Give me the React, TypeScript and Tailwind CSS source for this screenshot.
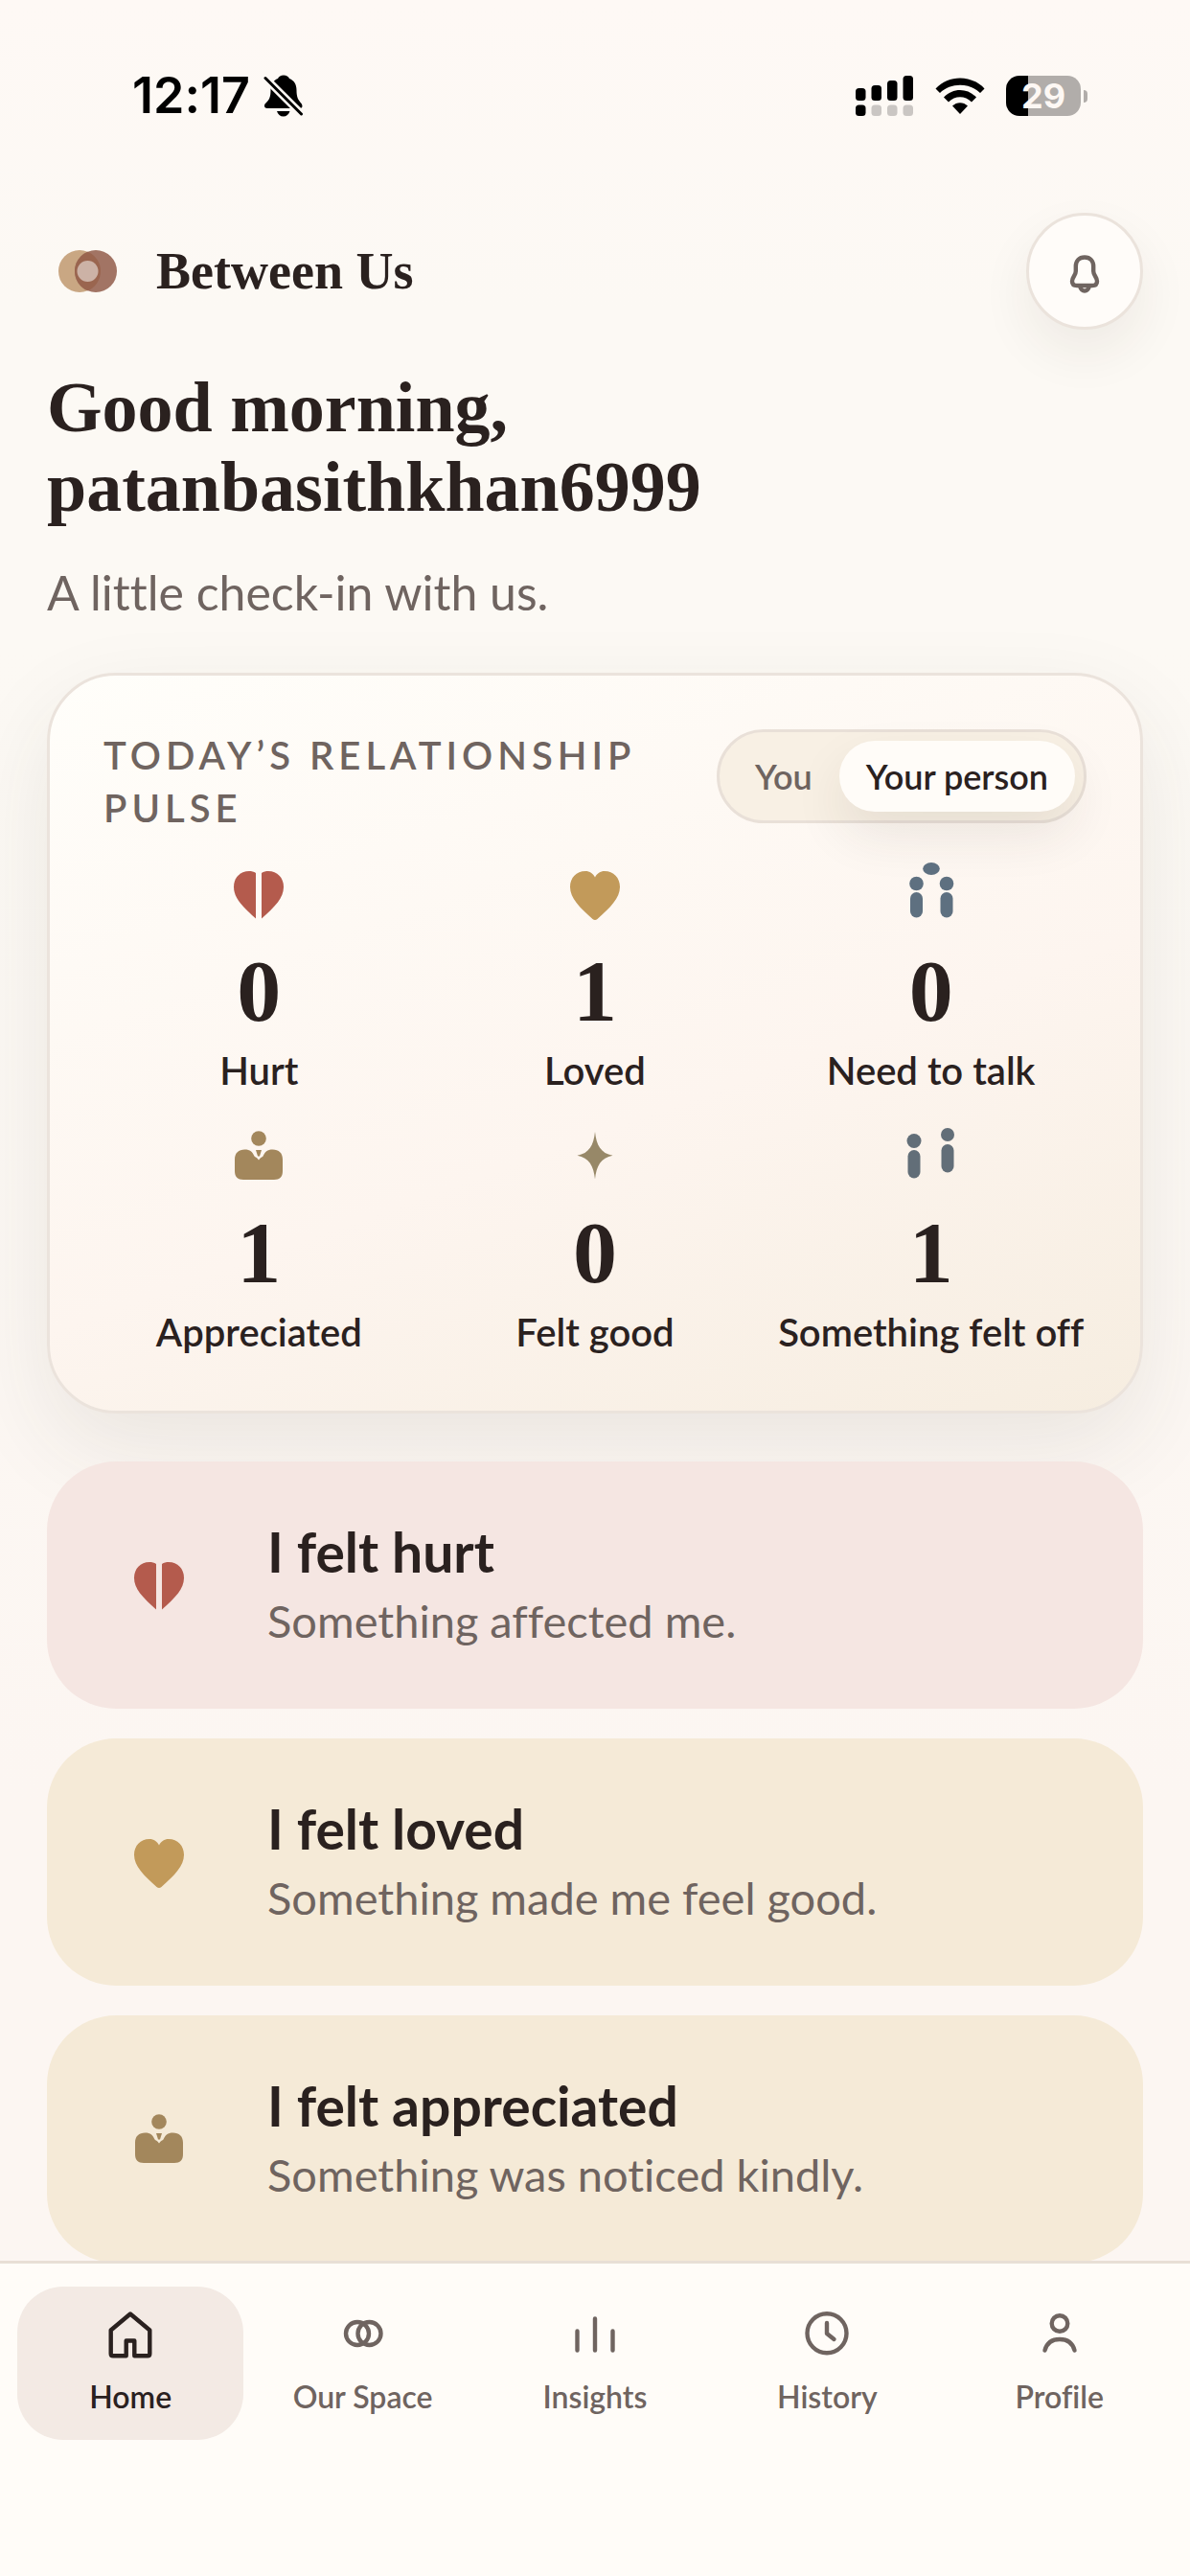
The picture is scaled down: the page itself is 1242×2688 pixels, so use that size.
import React, { useState } from "react";
import clsx from "clsx";

const sans =
  "font-['Lato','Noto_Sans',sans-serif] [font-variant-ligatures:none]";
const serif = "font-['Liberation_Serif',serif]";

type IconProps = { className?: string };

const HurtIcon = ({ className }: IconProps) => (
  <svg viewBox="0 0 72 72" className={className} fill="#b45b4d">
    <path d="M33 14C31 12.600 28.500 12 26 12C16.500 12 10 19 10 28.500C10 40 19 49 33 61.500Z" />
    <path d="M39 14C41 12.600 43.500 12 46 12C55.500 12 62 19 62 28.500C62 40 53 49 39 61.500Z" />
  </svg>
);

const LovedIcon = ({ className }: IconProps) => (
  <svg viewBox="0 0 72 72" className={className} fill="#c29a5a">
    <path d="M36 18.500C38 14.500 41.500 12 46 12C55.500 12 62 19 62 28.500C62 40 52 50 38.500 62Q36 64 33.500 62C20 50 10 40 10 28.500C10 19 16.500 12 26 12C30.500 12 34 14.500 36 18.500Z" />
  </svg>
);

const TalkIcon = ({ className }: IconProps) => (
  <svg viewBox="0 0 72 72" className={className} fill="#5e7080">
    <ellipse cx="36" cy="9.500" rx="8.800" ry="6.400" />
    <circle cx="20.500" cy="25" r="7.300" />
    <circle cx="52" cy="25" r="7.300" />
    <rect x="14" y="34" width="13" height="26.500" rx="6.500" />
    <rect x="45.500" y="34" width="13" height="26.500" rx="6.500" />
  </svg>
);

const AppreciatedIcon = ({ className }: IconProps) => (
  <svg viewBox="0 0 72 72" className={className} fill="#a3875c">
    <circle cx="36" cy="18" r="7.800" />
    <path d="M11 40C11 33 15 29.500 21.500 29.500C27 29.500 29.500 32 31.500 36.500C32.500 37.500 34 37.500 36 40.500C38 37.500 39.500 37.500 40.500 36.500C42.500 32 45 29.500 50.500 29.500C57 29.500 61 33 61 40V52C61 58 58 61 52 61H20C14 61 11 58 11 52Z" />
    <path d="M33 30H39L37 36.500H35Z" />
  </svg>
);

const GoodIcon = ({ className }: IconProps) => (
  <svg viewBox="0 0 72 72" className={className} fill="#978868">
    <path d="M36 11C37.500 25 42 33.500 54.500 35.700C42 38 37.500 46.500 36 60.500C34.500 46.500 30 38 17.500 35.700C30 33.500 34.500 25 36 11Z" />
  </svg>
);

const OffIcon = ({ className }: IconProps) => (
  <svg viewBox="0 0 72 72" className={className} fill="#626e78">
    <circle cx="18" cy="20.500" r="7.500" />
    <circle cx="53" cy="14" r="7" />
    <rect x="11.500" y="30" width="13" height="29.500" rx="6.500" />
    <rect x="46.500" y="24" width="13" height="29.500" rx="6.500" />
  </svg>
);

const line = {
  fill: "none",
  stroke: "currentColor",
  strokeWidth: 4.4,
  strokeLinecap: "round",
  strokeLinejoin: "round",
} as const;

const BellIcon = ({ className }: IconProps) => (
  <svg viewBox="0 0 72 72" className={className} {...line}>
    <path d="M36 21.500C30 21.500 26.800 25.500 26.800 31V36C26.800 40.500 23 42 23 46.500C23 49.500 25 51 28 51H44C47 51 49 49.500 49 46.500C49 42 45.200 40.500 45.200 36V31C45.200 25.500 42 21.500 36 21.500Z" />
    <path d="M31 51.500C32 55 33.500 56.500 36 56.500S40 55 41 51.500" />
  </svg>
);

const HomeIcon = ({ className }: IconProps) => (
  <svg viewBox="0 0 72 72" className={className} {...line}>
    <path d="M36 15.500L15.700 32.500V57Q15.700 59.300 18 59.300H31.700V43.500H40.300V59.300H54Q56.300 59.300 56.300 57V32.500Z" />
  </svg>
);

const SpaceIcon = ({ className }: IconProps) => (
  <svg viewBox="0 0 72 72" className={className} {...line}>
    <circle cx="30" cy="36" r="12" />
    <circle cx="42.500" cy="36" r="12" />
  </svg>
);

const InsightsIcon = ({ className }: IconProps) => (
  <svg viewBox="0 0 72 72" className={className} {...line}>
    <path d="M17.500 33.500V53.500M36 20.500V53.500M54.500 33.500V53.500" />
  </svg>
);

const HistoryIcon = ({ className }: IconProps) => (
  <svg viewBox="0 0 72 72" className={className} {...line}>
    <circle cx="36" cy="35.700" r="20.500" />
    <path d="M36 25V36L43.500 42" />
  </svg>
);

const ProfileIcon = ({ className }: IconProps) => (
  <svg viewBox="0 0 72 72" className={className} {...line}>
    <circle cx="36" cy="25.500" r="8.300" />
    <path d="M20.500 53.500C22.500 46 28 42 36 42S49.500 46 51.500 53.500" />
  </svg>
);

const Logo = () => (
  <svg viewBox="0 0 90 90" className="size-[90px]">
    <circle cx="34" cy="45" r="22" fill="#c9a783" />
    <circle cx="51" cy="45" r="22" fill="#a27464" />
    <path
      d="M42.500 24.700A22 22 0 0 1 42.500 65.300A22 22 0 0 1 42.500 24.700Z"
      fill="#9a654f"
    />
    <circle cx="42.500" cy="45" r="11" fill="#ccb2a6" />
  </svg>
);

const pulse = [
  { label: "Hurt", count: 0, Icon: HurtIcon },
  { label: "Loved", count: 1, Icon: LovedIcon },
  { label: "Need to talk", count: 0, Icon: TalkIcon },
  { label: "Appreciated", count: 1, Icon: AppreciatedIcon },
  { label: "Felt good", count: 0, Icon: GoodIcon },
  { label: "Something felt off", count: 1, Icon: OffIcon },
];

const actions = [
  {
    title: "I felt hurt",
    text: "Something affected me.",
    Icon: HurtIcon,
    bg: "bg-[#f5e6e2]",
  },
  {
    title: "I felt loved",
    text: "Something made me feel good.",
    Icon: LovedIcon,
    bg: "bg-[#f5ead7]",
  },
  {
    title: "I felt appreciated",
    text: "Something was noticed kindly.",
    Icon: AppreciatedIcon,
    bg: "bg-[#f5ead7]",
  },
];

const tabs = [
  { label: "Home", Icon: HomeIcon },
  { label: "Our Space", Icon: SpaceIcon },
  { label: "Insights", Icon: InsightsIcon },
  { label: "History", Icon: HistoryIcon },
  { label: "Profile", Icon: ProfileIcon },
];

const StatusBar = () => (
  <div className="flex h-[200px] items-center justify-between pr-[107px] pl-[138px] font-['Inter',sans-serif] text-black">
    <div className="flex items-center gap-[14px]">
      <span className="text-[52px] leading-none font-semibold">12:17</span>
      <svg viewBox="0 0 42 44" className="h-[44px] w-[42px]">
        <path d="M21 0.500C24 0.500 26 2 27 4C32 6 34.500 10 34.500 16C34.500 23 36 26 39.500 30C41 32 41 35 38 35H4C0.500 35 0 31.500 2.500 29.500C6 26.500 7.500 23 7.500 16C7.500 10 10 6 15 4C16 2 18 0.500 21 0.500Z" />
        <path d="M14 38H27.500C26.500 41.500 24 43.500 20.700 43.500S15 41.500 14 38Z" />
        <path d="M2 3.500L39.500 41" stroke="#fdf8f4" strokeWidth="8" />
        <path
          d="M2 3.500L39.500 41"
          stroke="#000"
          strokeWidth="3"
          strokeLinecap="round"
        />
      </svg>
    </div>
    <div className="flex items-center">
      <svg viewBox="0 0 60 42" className="h-[42px] w-[60px]">
        <rect x="0" y="13" width="10.500" height="13" rx="3.500" />
        <rect x="16.500" y="10" width="10.500" height="16" rx="3.500" />
        <rect x="33" y="5" width="10.500" height="21" rx="3.500" />
        <rect x="49.500" y="0" width="10.500" height="26" rx="3.500" />
        <rect x="0" y="30.500" width="10.500" height="11.500" rx="3.500" />
        <g fill="#cac6c3">
          <rect x="16.500" y="30.500" width="10.500" height="11.500" rx="3.500" />
          <rect x="33" y="30.500" width="10.500" height="11.500" rx="3.500" />
          <rect x="49.500" y="30.500" width="10.500" height="11.500" rx="3.500" />
        </g>
      </svg>
      <svg viewBox="0 0 52 38" className="ml-[23px] h-[38px] w-[52px]">
        <path d="M0.500 11.500C14 -3.200 38 -3.200 51.500 11.500L47 16C36 5 16 5 5 16Z" />
        <path d="M9 20.500C18.500 10.500 33.500 10.500 43 20.500L38 25.500C31.500 18.500 20.500 18.500 14 25.500Z" />
        <path d="M18 29.500C22.500 25 29.500 25 34 29.500L26 38Z" />
      </svg>
      <div className="ml-[22px] flex h-[42px] w-[78px] items-center justify-center rounded-[14px] bg-[linear-gradient(to_right,#000_30%,#b1adaa_30%)] text-[36px] leading-none font-bold text-[#fdf8f4]">
        29
      </div>
      <div className="ml-[3px] h-[13px] w-[4px] rounded-r-full bg-[#b1adaa]" />
    </div>
  </div>
);

const Index = () => {
  const [person, setPerson] = useState("Your person");
  const [tab, setTab] = useState("Home");

  return (
    <div
      className={clsx(
        "flex h-screen flex-col bg-[linear-gradient(to_bottom,#fef9f5,#fcf9f4_12%,#fcf9f4_25%,#fcf6f2_70%)] text-[#2a211f]",
        sans
      )}
    >
      <main className="min-h-0 flex-1 overflow-hidden">
        <StatusBar />

        <div className="px-[49px] pt-[22px]">
          <header className="flex items-center justify-between">
            <div className="flex items-center gap-6">
              <Logo />
              <span className={clsx("text-[54px] leading-none font-bold", serif)}>
                Between Us
              </span>
            </div>
            <button
              aria-label="Notifications"
              className="flex size-[122px] items-center justify-center rounded-full border-[3px] border-[#ebe3dc] bg-[#fffcf9] text-[#6f6460] shadow-[0_24px_54px_rgba(60,45,35,0.07)]"
            >
              <BellIcon className="size-[72px]" />
            </button>
          </header>

          <h1
            className={clsx(
              "mt-10 text-[74px] leading-[83px] font-bold",
              serif
            )}
          >
            Good morning,
            <br />
            patanbasithkhan6999
          </h1>
          <p className="mt-8 text-[50px] leading-[72px] text-[#6f6460]">
            A little check-in with us.
          </p>

          <section className="mt-12 rounded-[72px] border-[3px] border-[#ebe3dc] bg-[linear-gradient(160deg,#fffefa,#fdf5ef_58%,#f6ede0)] px-14 pt-14 pb-[58px] shadow-[0_36px_96px_rgba(60,50,40,0.09)]">
            <div className="flex items-start justify-between">
              <h2 className="w-[600px] text-[40px] leading-[55px] font-semibold tracking-[5px] text-[#6f6460] uppercase">
                Today’s relationship pulse
              </h2>
              <div className="flex shrink-0 rounded-full border-[3px] border-[#e9e0d8] bg-[#f8f0e4] p-[9px]">
                {["You", "Your person"].map((name) => (
                  <button
                    key={name}
                    onClick={() => setPerson(name)}
                    className={clsx(
                      "h-[74px] rounded-full px-7 text-[36px] font-semibold",
                      person === name
                        ? "bg-[#fffcf8] shadow-[0_24px_54px_rgba(60,45,35,0.09)]"
                        : "text-[#6f6460]"
                    )}
                  >
                    {name}
                  </button>
                ))}
              </div>
            </div>

            <div className="mt-[26px] grid grid-cols-3 gap-x-[26px] gap-y-[29px]">
              {pulse.map(({ label, count, Icon }) => (
                <div key={label} className="flex flex-col items-center">
                  <Icon className="size-[72px]" />
                  <span
                    className={clsx(
                      "mt-5 text-[92px] leading-[90px] font-bold",
                      serif
                    )}
                  >
                    {count}
                  </span>
                  <span className="mt-[14px] text-[40px] leading-[48px] font-semibold whitespace-nowrap">
                    {label}
                  </span>
                </div>
              ))}
            </div>
          </section>

          <div className="mt-[50px] flex flex-col gap-[31px]">
            {actions.map(({ title, text, Icon, bg }) => (
              <button
                key={title}
                className={clsx(
                  "flex h-[258px] shrink-0 items-center gap-[41px] rounded-[72px] px-[45px] text-left",
                  bg
                )}
              >
                <span className="flex size-[144px] items-center justify-center">
                  <Icon className="size-[72px]" />
                </span>
                <span className="flex flex-col gap-[10px]">
                  <span className="text-[57px] leading-[64px] font-bold">
                    {title}
                  </span>
                  <span className="text-[47px] leading-[60px] text-[#6f6460]">
                    {text}
                  </span>
                </span>
              </button>
            ))}
          </div>
        </div>
      </main>

      <nav className="grid shrink-0 grid-cols-5 gap-[6px] border-t-[3px] border-[#e8dfd6] bg-[#fffcf8] px-[18px] pt-6 pb-[142px]">
        {tabs.map(({ label, Icon }) => (
          <button
            key={label}
            onClick={() => setTab(label)}
            className={clsx(
              "flex h-[160px] flex-col items-center rounded-[48px] pt-[13px] text-[32px] leading-[40px] font-semibold",
              tab === label ? "bg-[#f3eae4]" : "text-[#6f6460]"
            )}
          >
            <Icon className="size-[72px]" />
            <span className="mt-[10px]">{label}</span>
          </button>
        ))}
      </nav>
    </div>
  );
};
export default Index;
